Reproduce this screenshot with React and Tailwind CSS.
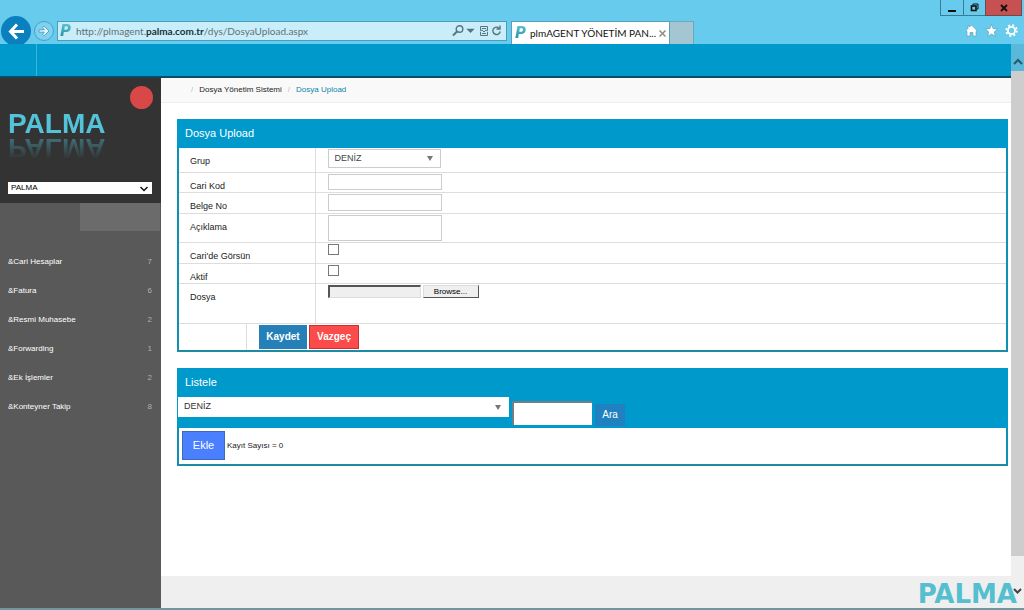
import { useState } from 'react';

const MENU = [
  { label: '&Cari Hesaplar', count: 7 },
  { label: '&Fatura', count: 6 },
  { label: '&Resmi Muhasebe', count: 2 },
  { label: '&Forwarding', count: 1 },
  { label: '&Ek İşlemler', count: 2 },
  { label: '&Konteyner Takip', count: 8 },
];

const SiteIcon = () => (
  <span className="bg-gradient-to-b from-[#5fc3d8] to-[#178a98] bg-clip-text font-['DejaVu_Sans',sans-serif] text-[15px] leading-4 font-bold text-transparent italic">P</span>
);

const WindowButtons = () => (
  <div className="flex h-4 justify-end pr-[2px]">
    <button aria-label="Simge durumuna küçült" className="flex w-6 items-center justify-center border border-t-0 border-[#3c7b90]">
      <svg width="10" height="10" viewBox="0 0 10 10"><path d="M1 8H9" stroke="#111" strokeWidth="2" /></svg>
    </button>
    <button aria-label="Geri yükle" className="flex w-[21px] items-center justify-center border-b border-[#3c7b90]">
      <svg width="9" height="9" viewBox="0 0 9 9" fill="none" stroke="#111"><path d="M3 2V1H8V6H7" /><rect x="1.5" y="3" width="4.5" height="4.5" strokeWidth="1.6" /></svg>
    </button>
    <button aria-label="Kapat" className="flex w-[37px] items-center justify-center border border-t-0 border-[#6d4b4d] bg-[#c75050]">
      <svg width="8" height="8" viewBox="0 0 8 8"><path d="M1 1L7 7M7 1L1 7" stroke="#111" strokeWidth="1.8" /></svg>
    </button>
  </div>
);

const BrowserBar = () => (
  <header className="bg-[#66cbec] font-['Lato','Open_Sans',sans-serif]">
    <WindowButtons />
    <div className="flex h-7 items-start overflow-hidden">
      <button aria-label="Geri" className="ml-px flex size-[30px] shrink-0 items-center justify-center rounded-full bg-[#0b80bf] text-white">
        <svg width="17" height="17" viewBox="0 0 17 17" fill="none" stroke="currentColor" strokeWidth="3"><path d="M16 8.5H2.5M9 1.5L2.5 8.5L9 15.5" /></svg>
      </button>
      <button aria-label="İleri" className="mt-[5px] ml-[3px] flex size-5 shrink-0 items-center justify-center rounded-full border border-[#4a9fc4] bg-[#7ed2f0]">
        <svg width="12" height="12" viewBox="0 0 12 12" fill="#e4f7fd" stroke="#4a9fc4" strokeWidth="0.9"><path d="M1 4.8H6.3L4.5 2.5L6 1.2L11 6L6 10.8L4.5 9.5L6.3 7.2H1Z" /></svg>
      </button>
      <div className="mt-[5px] ml-[3px] flex h-5 w-[450px] items-center border border-[#4c9dbc] bg-[#c9eef9] pr-1 pl-[2px]">
        <SiteIcon />
        <a href="#adres" className="ml-[5px] grow text-[10px] leading-4 text-[#5f7179]">
          http://plmagent.<span className="font-bold text-[#16313d]">palma.com.tr</span>/dys/DosyaUpload.aspx
        </a>
        <svg width="50" height="12" viewBox="0 0 50 12" fill="none" stroke="#58747f" strokeWidth="1.4">
          <circle cx="7.5" cy="4" r="3.3" />
          <path d="M5 6.5L1 10.5" strokeWidth="2" />
          <path d="M16 4.5H21L18.5 7Z" fill="#58747f" />
          <path d="M28.5 5V1.5H35.5V5M28.5 7V10.5H35.5V7M30 3.5H34M30 8.5H34M28 6L30 5L32 7L34 5L36 6" strokeWidth="1" />
          <path d="M47 3A3.7 3.7 0 1 0 48.2 6.5M48 0.5V4H44.5" />
        </svg>
      </div>
      <div className="mt-[5px] ml-1 flex h-[23px] w-[159px] items-center border border-b-0 border-[#5a9fb8] bg-white px-[3px]">
        <SiteIcon />
        <span className="ml-1 grow text-[10px] leading-4 whitespace-nowrap text-[#111]">plmAGENT YÖNETİM PAN...</span>
        <button aria-label="Sekmeyi kapat">
          <svg width="7" height="7" viewBox="0 0 7 7"><path d="M0.5 0.5L6.5 6.5M6.5 0.5L0.5 6.5" stroke="#8c8c8c" strokeWidth="1.5" /></svg>
        </button>
      </div>
      <button aria-label="Yeni sekme" className="mt-[5px] h-[23px] w-6 border border-b-0 border-l-0 border-[#6ba9bf] bg-[#a3c6d2]"></button>
      <nav className="mt-2 mr-[6px] ml-auto flex gap-[7px] text-white">
        <button aria-label="Giriş sayfası">
          <svg width="13" height="13" viewBox="0 0 13 13" fill="currentColor" stroke="#5b97ad" strokeWidth="0.6"><path d="M6.5 1L12 6.5L11 7.3V12H8V8.5H5V12H2V7.3L1 6.5L3 4.5V2H4.5V3Z" /></svg>
        </button>
        <button aria-label="Sık kullanılanlar">
          <svg width="13" height="13" viewBox="0 0 13 13" fill="currentColor" stroke="#5b97ad" strokeWidth="0.6"><path d="M6.5 0.5L8.2 4.7L12.6 5L9.2 7.9L10.3 12.3L6.5 9.9L2.7 12.3L3.8 7.9L0.4 5L4.8 4.7Z" /></svg>
        </button>
        <button aria-label="Araçlar">
          <svg width="13" height="13" viewBox="0 0 13 13" fill="none" stroke="currentColor"><circle cx="6.5" cy="6.5" r="3.6" strokeWidth="1.8" /><circle cx="6.5" cy="6.5" r="5.3" strokeWidth="1.8" strokeDasharray="2.08 2.08" /></svg>
        </button>
      </nav>
    </div>
  </header>
);

const Sidebar = () => (
  <aside className="flex w-[161px] shrink-0 flex-col bg-[#595959]">
    <div className="h-[125px] bg-[#333] px-2 pt-2">
      <div className="flex h-24 items-start justify-between">
        <span className="mt-6 text-[28px] leading-7 font-bold text-[#52c3d9] [-webkit-box-reflect:below_-4px_linear-gradient(transparent_10%,rgba(0,0,0,.5))]">PALMA</span>
        <span className="size-[23px] rounded-full bg-[#d94848]"></span>
      </div>
      <div className="relative w-36">
        <select aria-label="Firma" className="block h-3 w-full appearance-none bg-white pl-[3px] text-[8px] leading-3 text-black">
          <option>PALMA</option>
        </select>
        <svg className="pointer-events-none absolute top-1 right-1" width="8" height="6" viewBox="0 0 8 6" fill="none" stroke="#111" strokeWidth="1.5"><path d="M0.5 1L4 4.5L7.5 1" /></svg>
      </div>
    </div>
    <div className="mr-px h-7 w-20 self-end bg-[#6b6b6b]"></div>
    <nav className="mt-4">
      {MENU.map(item => (
        <a key={item.label} href="#menu" className="flex h-[29px] items-center justify-between pr-[9px] pl-2 text-[8px] text-white">
          <span>{item.label}</span>
          <span className="text-[#b0b0b0]">{item.count}</span>
        </a>
      ))}
    </nav>
  </aside>
);

const DropArrow = ({ className }) => (
  <svg className={`pointer-events-none absolute ${className}`} width="6" height="5" viewBox="0 0 6 5"><path d="M0 0H6L3 5Z" fill="#777" /></svg>
);

const Row = ({ label, id, height, children }) => (
  <tr className={`border-b border-[#ddd] ${height}`}>
    <th className="w-[136px] border-r border-[#ddd] pt-[7px] pl-[11px] text-left align-top text-[9px] leading-3 font-normal text-[#222]">
      <label htmlFor={id}>{label}</label>
    </th>
    <td className="pt-px pl-3 align-top">{children}</td>
  </tr>
);

const PanelTitle = ({ children }) => (
  <h2 className="h-[29px] bg-[#0099cc] pl-2 text-[11px] leading-[29px] text-white">{children}</h2>
);

const UploadPanel = () => {
  const [form, setForm] = useState({ cariKod: '', belgeNo: '', aciklama: '' });
  const handleChange = (e) => setForm({ ...form, [e.target.name]: e.target.value });
  const field = 'block w-[114px] border border-[#ccc] bg-white px-1 text-[9px]';
  const check = 'block size-[11px] appearance-none border border-[#777] bg-white checked:bg-[#2a80b9]';

  return (
    <section className="border-b-2 border-[#1c8ba3] bg-white">
      <PanelTitle>Dosya Upload</PanelTitle>
      <form className="border-x-2 border-[#1190b5]" onSubmit={(e) => e.preventDefault()}>
        <table className="w-full table-fixed border-collapse">
          <tbody>
            <Row label="Grup" id="grup" height="h-6">
              <div className="relative w-[113px]">
                <select id="grup" className="block h-[19px] w-full appearance-none border border-[#ccc] bg-white pl-[6px] text-[9px] text-[#444]">
                  <option>DENİZ</option>
                </select>
                <DropArrow className="top-[7px] right-2" />
              </div>
            </Row>
            <Row label="Cari Kod" id="cariKod" height="h-5">
              <input id="cariKod" name="cariKod" value={form.cariKod} onChange={handleChange} className={`${field} h-4`} />
            </Row>
            <Row label="Belge No" id="belgeNo" height="h-[21px]">
              <input id="belgeNo" name="belgeNo" value={form.belgeNo} onChange={handleChange} className={`${field} h-[17px]`} />
            </Row>
            <Row label="Açıklama" id="aciklama" height="h-[29px]">
              <textarea id="aciklama" name="aciklama" value={form.aciklama} onChange={handleChange} className={`${field} h-[26px] resize-none`} />
            </Row>
            <Row label="Cari'de Görsün" id="gorsun" height="h-[21px]">
              <input id="gorsun" type="checkbox" className={check} />
            </Row>
            <Row label="Aktif" id="aktif" height="h-5">
              <input id="aktif" type="checkbox" className={check} />
            </Row>
            <Row label="Dosya" id="dosya" height="h-10">
              <div className="flex gap-[2px]">
                <input id="dosya" readOnly className="h-[13px] w-[93px] border border-t-2 border-l-2 border-[#ddd] border-t-[#555] border-l-[#555] bg-[#efefef]" />
                <button type="button" className="h-[13px] w-[56px] border border-[#ddd] border-r-[#555] border-b-[#555] bg-[#efefef] text-[8px] leading-[11px] text-black">Browse...</button>
              </div>
            </Row>
            <tr>
              <td colSpan={2}>
                <div className="flex h-[26px]">
                  <div className="w-[68px] border-r border-[#ddd]"></div>
                  <div className="flex gap-[2px] pt-px pl-3">
                    <button type="submit" className="h-6 w-12 bg-[#2580b8] text-[10px] font-bold text-white">Kaydet</button>
                    <button type="reset" className="h-6 w-[50px] border border-[#c43232] bg-[#fc4b4b] text-[10px] font-bold text-white">Vazgeç</button>
                  </div>
                </div>
              </td>
            </tr>
          </tbody>
        </table>
      </form>
    </section>
  );
};

const ListPanel = () => (
  <section className="border-b-2 border-[#1c8ba3] bg-white">
    <PanelTitle>Listele</PanelTitle>
    <div className="flex h-[31px] items-start bg-[#0099cc] pl-px">
      <div className="relative w-[331px]">
        <select aria-label="Grup seç" className="block h-5 w-full appearance-none bg-white pl-[6px] text-[9px] text-[#333]">
          <option>DENİZ</option>
        </select>
        <DropArrow className="top-2 right-2" />
      </div>
      <input aria-label="Arama" className="mt-1 ml-[3px] h-6 w-20 border-t-2 border-l-2 border-[#6f7f86] bg-white px-1 text-[10px]" />
      <button className="mt-[7px] ml-[3px] h-[22px] w-[30px] bg-[#2080c0] text-[10px] text-white">Ara</button>
    </div>
    <div className="flex h-9 items-center border-x-2 border-[#1190b5] pl-[3px]">
      <button className="h-[29px] w-[43px] border border-[#3a6ab8] bg-[#4a80ff] text-[11px] text-white">Ekle</button>
      <span className="ml-[2px] text-[8px] text-[#222]">Kayıt Sayısı = 0</span>
    </div>
  </section>
);

const ScrollBar = () => (
  <div className="flex w-[13px] shrink-0 flex-col bg-[#efefef]">
    <div className="flex h-[27px] items-center justify-center bg-[#58b9da] pt-2">
      <svg width="10" height="7" viewBox="0 0 10 7" fill="none" stroke="#245a6c" strokeWidth="2"><path d="M1 6L5 2L9 6" /></svg>
    </div>
    <div className="grow bg-[#cdcdcd]"></div>
    <div className="flex h-[52px] items-center justify-center pt-[18px]">
      <svg width="9" height="6" viewBox="0 0 9 6" fill="none" stroke="#444" strokeWidth="2"><path d="M1 1L4.5 4.5L8 1" /></svg>
    </div>
  </div>
);

const App = () => (
  <div className="flex min-h-screen flex-col bg-white font-['Liberation_Sans',Arial,sans-serif]">
    <BrowserBar />
    <div className="flex grow">
      <div className="flex min-w-0 grow flex-col">
        <div className="h-[34px] border-b-2 border-[#0b4a60] bg-[#0099cc]">
          <div className="h-full w-[37px] border-r border-[#3db3da]"></div>
        </div>
        <div className="flex grow">
          <Sidebar />
          <main className="flex min-w-0 grow flex-col">
            <nav className="flex h-[25px] items-center gap-[6px] border-b border-[#eee] bg-[#faf9fa] pl-[30px] text-[8px] text-[#222]">
              <span className="text-[#bbb]">/</span>
              <a href="#dys">Dosya Yönetim Sistemi</a>
              <span className="text-[#bbb]">/</span>
              <a href="#upload" className="text-[#0f84a8]">Dosya Upload</a>
            </nav>
            <div className="flex flex-col gap-4 pt-4 pr-[3px] pb-4 pl-4">
              <UploadPanel />
              <ListPanel />
            </div>
            <footer className="mt-auto flex h-8 justify-end bg-[#efefef]">
              <span className="relative z-10 -mr-[6px] pt-1 font-['DejaVu_Sans',sans-serif] text-[26px] leading-7 font-bold text-[#55bfd0]">PALMA</span>
            </footer>
          </main>
        </div>
      </div>
      <ScrollBar />
    </div>
    <div className="h-[2px] bg-[#6f969e]"></div>
  </div>
);

export default App;
